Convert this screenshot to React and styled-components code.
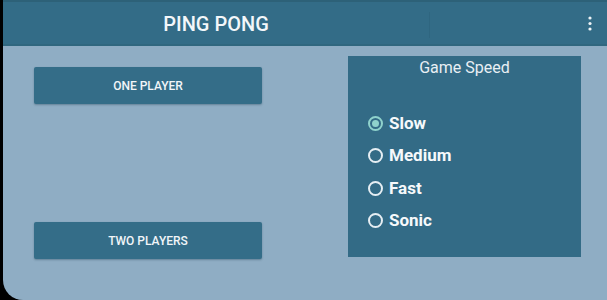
import React, { useState } from "react";
import styled, { createGlobalStyle } from "styled-components";

const GlobalStyle = createGlobalStyle`
  html, body {
    margin: 0;
    padding: 0;
    background: #000;
  }
  body {
    font-family: Roboto, "Liberation Sans", sans-serif;
  }
`;

const Screen = styled.div`
  width: 607px;
  height: 300px;
  background: #000;
  display: flex;
  overflow: hidden;
`;

const AppWindow = styled.div`
  margin-left: 3px;
  flex: 1;
  display: flex;
  flex-direction: column;
  background: #8fadc4;
  border-bottom-left-radius: 20px;
  overflow: hidden;
`;

const Toolbar = styled.div`
  height: 46px;
  flex-shrink: 0;
  display: flex;
  align-items: stretch;
  background: #336c87;
  border-top: 2px solid #2d6178;
  box-sizing: border-box;
  box-shadow: inset 0 -2px 0 #30677f;
`;

const TitleArea = styled.div`
  width: 426px;
  display: flex;
  align-items: center;
  justify-content: center;
`;

const Title = styled.h1`
  margin: 0;
  font-size: 20px;
  font-weight: 500;
  color: #f3f7fa;
  letter-spacing: 0;
`;

const Divider = styled.div`
  width: 1px;
  margin: 10px 0 8px;
  background: #2f6680;
`;

const ActionArea = styled.div`
  flex: 1;
  display: flex;
  align-items: center;
  justify-content: flex-end;
  padding-right: 13px;
  padding-bottom: 2px;
`;

const MenuButton = styled.button`
  border: 0;
  background: none;
  padding: 0;
  width: 8px;
  height: 16px;
  display: flex;
  align-items: center;
  justify-content: center;
  cursor: pointer;
`;

const Content = styled.div`
  flex: 1;
  display: flex;
  padding: 10px 0 0 31px;
`;

const ButtonColumn = styled.div`
  width: 228px;
  height: 192px;
  margin-top: 11px;
  display: flex;
  flex-direction: column;
  justify-content: space-between;
`;

const ModeButton = styled.button`
  height: 37px;
  border: 0;
  border-radius: 2px;
  background: #346d88;
  color: #f1f5f8;
  font-family: Roboto, "Liberation Sans", sans-serif;
  font-size: 12px;
  font-weight: 500;
  box-shadow: 0 1px 2px rgba(20, 50, 70, 0.35);
  cursor: pointer;
`;

const SpeedPanel = styled.section`
  width: 233px;
  height: 201px;
  margin-left: 86px;
  background: #336b86;
  box-sizing: border-box;
  padding: 2px 0 0 20px;
  display: flex;
  flex-direction: column;
`;

const PanelTitle = styled.div`
  margin-left: -20px;
  text-align: center;
  font-size: 16px;
  line-height: 19px;
  color: #e8eff4;
`;

const RadioList = styled.div`
  margin-top: 30px;
  display: flex;
  flex-direction: column;
`;

const RadioRow = styled.label`
  height: 32.5px;
  display: flex;
  align-items: center;
  gap: 6px;
  cursor: pointer;
`;

const RadioCircle = styled.span`
  width: 15px;
  height: 15px;
  box-sizing: border-box;
  border-radius: 50%;
  border: 2px solid ${(p) => (p.$checked ? "#8fd2cc" : "#e6eef3")};
  display: flex;
  align-items: center;
  justify-content: center;
  flex-shrink: 0;

  &::after {
    content: "";
    width: 7px;
    height: 7px;
    border-radius: 50%;
    background: ${(p) => (p.$checked ? "#8fd2cc" : "transparent")};
  }
`;

const RadioLabel = styled.span`
  font-size: 17px;
  font-weight: 700;
  color: #f6f9fb;
  margin-top: -1px;
`;

const MoreIcon = () => (
  <svg width="4" height="15" viewBox="0 0 4 15">
    <circle cx="2" cy="2" r="1.6" fill="#eef3f6" />
    <circle cx="2" cy="7.5" r="1.6" fill="#eef3f6" />
    <circle cx="2" cy="13" r="1.6" fill="#eef3f6" />
  </svg>
);

const speeds = ["Slow", "Medium", "Fast", "Sonic"];

export default function App() {
  const [speed, setSpeed] = useState("Slow");

  return (
    <>
      <GlobalStyle />
      <Screen>
        <AppWindow>
          <Toolbar>
            <TitleArea>
              <Title>PING PONG</Title>
            </TitleArea>
            <Divider />
            <ActionArea>
              <MenuButton aria-label="More options">
                <MoreIcon />
              </MenuButton>
            </ActionArea>
          </Toolbar>
          <Content>
            <ButtonColumn>
              <ModeButton>ONE PLAYER</ModeButton>
              <ModeButton>TWO PLAYERS</ModeButton>
            </ButtonColumn>
            <SpeedPanel>
              <PanelTitle>Game Speed</PanelTitle>
              <RadioList>
                {speeds.map((s) => (
                  <RadioRow key={s} onClick={() => setSpeed(s)}>
                    <RadioCircle $checked={speed === s} />
                    <RadioLabel>{s}</RadioLabel>
                  </RadioRow>
                ))}
              </RadioList>
            </SpeedPanel>
          </Content>
        </AppWindow>
      </Screen>
    </>
  );
}
